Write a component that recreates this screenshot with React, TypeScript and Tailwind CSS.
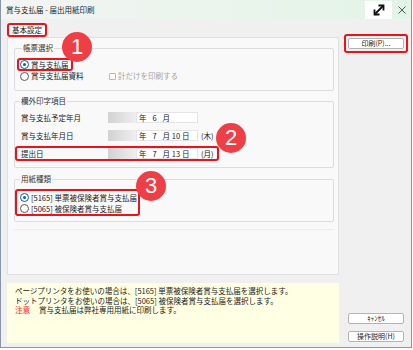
import React from 'react';

const FONT = "font-['Noto_Sans_CJK_JP','Liberation_Sans',sans-serif]";

function Radio({ checked }: { checked?: boolean }) {
  return checked ? (
    <span className="flex h-[9px] w-[9px] shrink-0 items-center justify-center rounded-full border-[1.5px] border-[#0b5eb3] bg-white">
      <span className="h-[3.5px] w-[3.5px] rounded-full bg-[#0b5eb3]" />
    </span>
  ) : (
    <span className="h-[9px] w-[9px] shrink-0 rounded-full border border-[#5c5c5c] bg-white" />
  );
}

function Group({ title, children, className }: { title: string; children: React.ReactNode; className?: string }) {
  return (
    <fieldset className={`rounded-[2px] border border-[#dcdcdc] ${className ?? ''}`}>
      <legend className="ml-[5px] px-[1px] text-[7.5px] leading-[10px] text-[#333]">{title}</legend>
      {children}
    </fieldset>
  );
}

function DateRow({
  label,
  month,
  day,
  week,
  marked,
}: {
  label: string;
  month: string;
  day?: string;
  week?: string;
  marked?: boolean;
}) {
  return (
    <div
      className={`flex h-[15px] w-[204px] items-center rounded-[3px] border-2 pl-[4px] ${
        marked ? 'border-[#e8141c]' : 'border-transparent'
      }`}
    >
      <span className="w-[87px] shrink-0">{label}</span>
      <span className="h-full w-[28px] shrink-0 bg-gradient-to-r from-[#d2d2d2] to-[#efefef]" />
      <span className="flex h-full w-[62px] shrink-0 items-center border border-[#e4e4e4] bg-white pl-[2px]">
        <span>年</span>
        <span className="w-[16px] text-center">{month}</span>
        <span>月</span>
        {day && (
          <>
            <span className="w-[12px] text-center">{day}</span>
            <span>日</span>
          </>
        )}
      </span>
      {week && <span className="ml-[3px] shrink-0">{week}</span>}
    </div>
  );
}

function Badge({ n, className }: { n: string; className: string }) {
  return (
    <div
      className={`absolute flex h-[30px] w-[30px] items-center justify-center rounded-full bg-[#ee3f46] font-['Liberation_Sans',sans-serif] text-[22px] leading-none text-white ${className}`}
    >
      {n}
    </div>
  );
}

function WinButton({ children }: { children: React.ReactNode }) {
  return (
    <div className="flex h-[11px] w-[56px] items-center justify-center rounded-[2px] border border-[#b4b4b4] bg-white text-[7px] leading-none text-[#222]">
      {children}
    </div>
  );
}

export default function App() {
  return (
    <div className={`relative h-[350px] w-[413px] overflow-hidden bg-white ${FONT} text-[7.5px] text-[#222]`}>
      <div className="flex h-[348px] w-[412px] flex-col border-x border-b border-[#8796a8] bg-[#f0f0f0]">
        {/* タイトルバー */}
        <div className="flex h-[19px] shrink-0 items-center bg-gradient-to-r from-[#f3f4f3] to-[#e3f4e7]">
          <span className="pl-[5px] text-[7.5px] text-[#1e1e1e]">賞与支払届 - 届出用紙印刷</span>
          <div className="ml-auto flex h-full items-center">
            <div className="flex h-[18px] w-[27px] items-center justify-center bg-white">
              <svg width="14" height="14" viewBox="0 0 14 14" fill="none" stroke="#111" strokeWidth="1.8">
                <line x1="2.5" y1="11.5" x2="11.5" y2="2.5" />
                <polyline points="6.5,2.5 11.5,2.5 11.5,7.5" />
                <polyline points="2.5,6.5 2.5,11.5 7.5,11.5" />
              </svg>
            </div>
            <div className="flex w-[19px] justify-center">
              <svg width="8" height="8" viewBox="0 0 8 8" stroke="#444" strokeWidth="0.9">
                <line x1="0.5" y1="0.5" x2="7.5" y2="7.5" />
                <line x1="7.5" y1="0.5" x2="0.5" y2="7.5" />
              </svg>
            </div>
          </div>
        </div>

        <div className="flex flex-1">
          {/* 左側 */}
          <div className="flex w-[338px] shrink-0 flex-col pl-[6px] pt-[4px]">
            <div className="flex h-[14px] w-[40px] items-center justify-center rounded-[3px] border-2 border-[#e8141c] bg-white leading-none">
              基本設定
            </div>

            <div className="flex h-[238px] flex-col border border-[#e0e0e0] bg-[#f9f9f9] pl-[6px] pr-[4px] pt-[5px]">
              <Group title="帳票選択" className="pb-[9px] pl-[2px]">
                <div className="mt-[5px] flex h-[13px] w-[56px] items-center gap-[2px] rounded-[3px] border-2 border-[#e8141c] pl-[1px]">
                  <Radio checked />
                  <span className="leading-none">賞与支払届</span>
                </div>
                <div className="flex h-[10px] items-center pl-[3px]">
                  <Radio />
                  <span className="ml-[2px] w-[78px] leading-none">賞与支払届資料</span>
                  <span className="h-[7px] w-[7px] rounded-[1px] border border-[#b8b8b8] bg-white" />
                  <span className="ml-[2px] leading-none text-[#a3a3a3]">計だけを印刷する</span>
                </div>
              </Group>

              <Group title="欄外印字項目" className="mt-[5px] pb-[6px]">
                <div className="mt-[4px] flex flex-col gap-[3px] leading-none">
                  <DateRow label="賞与支払予定年月" month="6" />
                  <DateRow label="賞与支払年月日" month="7" day="10" week="(木)" />
                  <DateRow label="提出日" month="7" day="13" week="(月)" marked />
                </div>
              </Group>

              <Group title="用紙種類" className="mt-[6px] pb-[5px]">
                <div className="mt-[5px] flex h-[27px] w-[125px] flex-col rounded-[3px] border-2 border-[#e8141c] pl-[3px] pt-[1px] leading-none">
                  <div className="flex h-[11px] items-center gap-[2px]">
                    <Radio checked />
                    <span>[5165] 単票被保険者賞与支払届</span>
                  </div>
                  <div className="flex h-[11px] items-center gap-[2px]">
                    <Radio />
                    <span>[5065] 被保険者賞与支払届</span>
                  </div>
                </div>
              </Group>

              <div className="mt-[7px] border-t border-[#ededed]" />
            </div>

            <div className="mt-[8px] h-[60px] bg-[#ffffe3] pl-[8px] pt-[3px] leading-[9.5px]">
              <p>ページプリンタをお使いの場合は、[5165] 単票被保険者賞与支払届を選択します。</p>
              <p>ドットプリンタをお使いの場合は、[5065] 被保険者賞与支払届を選択します。</p>
              <p>
                <span className="text-[#ff1a1a]">注意</span>
                <span className="ml-[9px]">賞与支払届は弊社専用用紙に印刷します。</span>
              </p>
            </div>
          </div>

          {/* 右側 */}
          <div className="flex flex-1 flex-col pb-[5px] pl-[5px] pt-[15px]">
            <div className="w-[64px] rounded-[3px] border-2 border-[#e8141c] p-[2px]">
              <WinButton>印刷(P)...</WinButton>
            </div>
            <div className="mt-auto flex flex-col gap-[7px] pl-[4px]">
              <WinButton>ｷｬﾝｾﾙ</WinButton>
              <WinButton>操作説明(H)</WinButton>
            </div>
          </div>
        </div>
      </div>

      <Badge n="1" className="left-[62px] top-[32px]" />
      <Badge n="2" className="left-[216px] top-[123px]" />
      <Badge n="3" className="left-[136px] top-[171px]" />
    </div>
  );
}
